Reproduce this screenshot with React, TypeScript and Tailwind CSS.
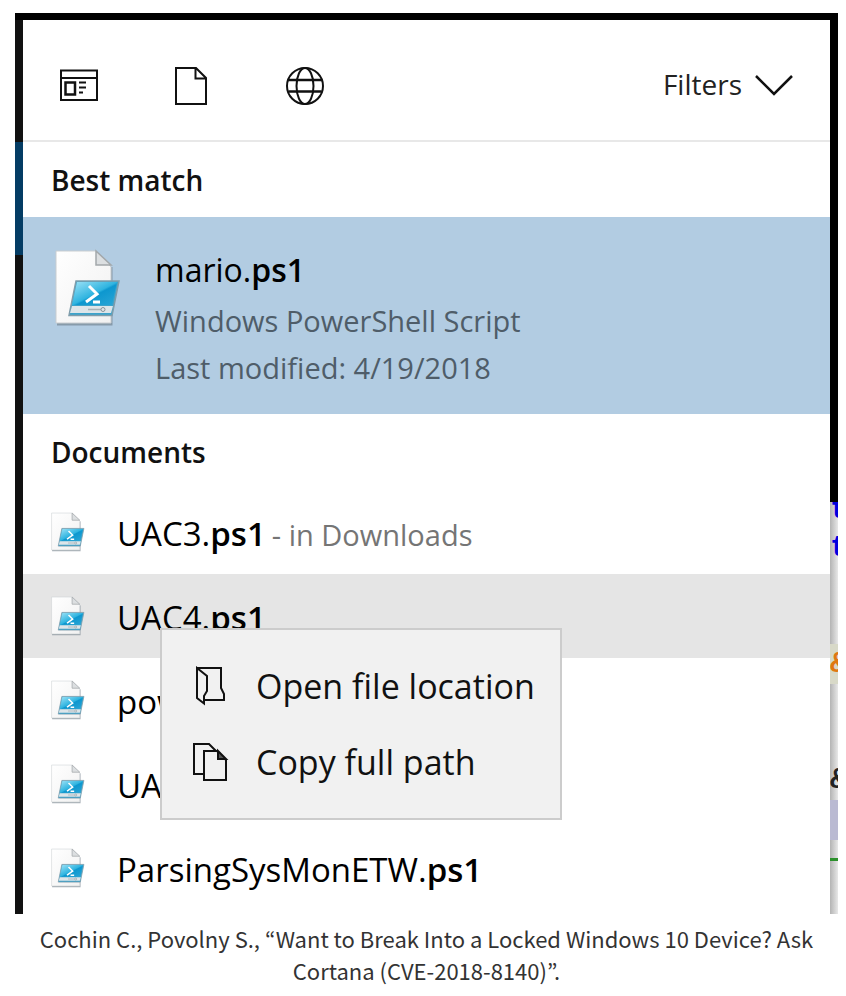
import React from "react";

function ScriptIcon({ className }: { className: string }) {
  return (
    <svg viewBox="0 0 66 78" className={className} aria-hidden="true">
      <defs>
        <linearGradient id="sheet" x1="0" y1="0" x2="1" y2="1">
          <stop offset="0" stopColor="#ffffff" />
          <stop offset="1" stopColor="#f1f1f1" />
        </linearGradient>
        <linearGradient id="glass" x1="0" y1="0" x2="1" y2="1">
          <stop offset="0" stopColor="#9fe3f7" />
          <stop offset="0.5" stopColor="#2fb4e0" />
          <stop offset="0.55" stopColor="#0d97cf" />
          <stop offset="1" stopColor="#2aa6d6" />
        </linearGradient>
      </defs>
      <path d="M2 75h54V18" fill="none" stroke="#6b7a86" strokeOpacity="0.6" strokeWidth="3" />
      <path d="M1 2h40l15 16v56H1z" fill="url(#sheet)" stroke="#c9cdd0" />
      <path d="M41 2v14h15z" fill="#dcdfe1" stroke="#a3a8ab" strokeWidth="1.5" />
      <path d="M21 32h43l-7 34.500H14z" fill="#3ba3cb" stroke="#7f9dab" strokeWidth="1.5" />
      <path d="M22 33h40l-5 23H17z" fill="url(#glass)" />
      <path d="M17 57h41l-2 7H15z" fill="#dde5e9" />
      <path d="M33 60.500h13" stroke="#a9b2b7" strokeWidth="1.500" />
      <circle cx="48" cy="60.500" r="2" fill="none" stroke="#8b9398" />
      <path d="M34 37l8 8-11 8M38 53h7" fill="none" stroke="#fff" strokeWidth="3" />
    </svg>
  );
}

function AppsIcon() {
  return (
    <svg viewBox="0 0 40 40" className="size-10" fill="none" stroke="#111" strokeWidth="2" aria-hidden="true">
      <path d="M2 4.500h36v29.500H2zM2 12h36" />
      <path d="M6.500 16.500h9.500v12H6.500z" strokeWidth="2.500" />
      <path d="M20 16.500h7M20 21.500h7M20 26.500h4" strokeWidth="2" />
    </svg>
  );
}

function PageIcon() {
  return (
    <svg viewBox="0 0 40 40" className="size-10" fill="none" stroke="#111" strokeWidth="2" aria-hidden="true">
      <path d="M4 2h20l10 10v26H4zM23.500 2v10.500H34" />
    </svg>
  );
}

function GlobeIcon() {
  return (
    <svg viewBox="0 0 40 40" className="size-10" fill="none" stroke="#111" strokeWidth="2" aria-hidden="true">
      <circle cx="20" cy="20" r="18" />
      <ellipse cx="20" cy="20" rx="8.500" ry="18" />
      <path d="M3.500 14h33M3.500 25.500h33" strokeWidth="2.500" />
    </svg>
  );
}

function FolderIcon() {
  return (
    <svg viewBox="0 0 40 40" className="size-10" fill="none" stroke="#111" strokeWidth="2" aria-hidden="true">
      <path d="M7 2h24v20l3 6v6H15" />
      <path d="M7 2v30l7 5.500V30l3-5V10z" />
    </svg>
  );
}

function CopyIcon() {
  return (
    <svg viewBox="0 0 40 40" className="size-10" fill="none" stroke="#111" strokeWidth="2" aria-hidden="true">
      <path d="M14 32H4V2h15l7 7" />
      <path d="M14 9h13l9 9v20H14z" />
      <path d="M28 9v8h8z" fill="#555" />
    </svg>
  );
}

function FileName({ stem }: { stem: string }) {
  return (
    <span>
      {stem}.<b className="font-semibold">ps1</b>
    </span>
  );
}

const documents = [
  { stem: "UAC3", folder: "in Downloads" },
  { stem: "UAC4", selected: true },
  { stem: "powerup" },
  { stem: "UAC" },
  { stem: "ParsingSysMonETW" },
];

function ContextMenu() {
  return (
    <div role="menu" className="absolute left-[137px] top-[54px] z-10 w-[402px] border-2 border-[#cccccc] bg-[#f1f1f1] py-[18px]">
      <button role="menuitem" className="flex h-[76px] w-full items-center gap-[26px] pl-7 text-[34px] leading-10">
        <FolderIcon />
        Open file location
      </button>
      <button role="menuitem" className="flex h-[76px] w-full items-center gap-[26px] pl-7 text-[34px] leading-10">
        <CopyIcon />
        Copy full path
      </button>
    </div>
  );
}

function SearchPanel() {
  return (
    <main className="min-w-0 flex-1 bg-white">
      <header className="flex h-[122px] items-center justify-between border-b-2 border-[#e8e8e8] px-9 pt-3">
        <nav className="flex gap-[73px]">
          <button aria-label="Apps"><AppsIcon /></button>
          <button aria-label="Documents"><PageIcon /></button>
          <button aria-label="Web"><GlobeIcon /></button>
        </nav>
        <button aria-haspopup="true" className="flex items-center gap-3 pb-1 text-[28px] leading-10 text-[#222]">
          Filters
          <svg viewBox="0 0 40 24" className="h-6 w-10" fill="none" stroke="#111" strokeWidth="2.500" aria-hidden="true">
            <path d="M2 4l18 18L38 4" />
          </svg>
        </button>
      </header>

      <h2 className="flex h-[75px] items-center pl-7 text-[28px] font-semibold leading-10">Best match</h2>
      <button className="flex h-[197px] w-full items-start gap-[34px] bg-[#b2cce2] pl-8 pt-8 text-left">
        <ScriptIcon className="h-[78px] w-[66px]" />
        <span className="flex flex-col text-[29px] leading-[47px] text-[#4f5d69]">
          <span className="text-[32px] leading-[42px] text-black"><FileName stem="mario" /></span>
          <span className="pt-[6px]">Windows PowerShell Script</span>
          <span>Last modified: 4/19/2018</span>
        </span>
      </button>

      <h2 className="flex h-[76px] items-center pl-7 text-[28px] font-semibold leading-10">Documents</h2>
      <ul>
        {documents.map((doc) => (
          <li key={doc.stem} className="relative last:pb-1">
            <button className={doc.selected ? "flex h-[84px] w-full items-center bg-[#e5e5e5] pl-7 text-left" : "flex h-[84px] w-full items-center pl-7 text-left"}>
              <ScriptIcon className="mr-8 h-10 w-[34px]" />
              <span className="flex items-baseline gap-[6px] pt-1 text-[33px] leading-[46px] text-black">
                <FileName stem={doc.stem} />
                {doc.folder && <span className="text-[29px] text-[#757575]">- {doc.folder}</span>}
              </span>
            </button>
            {doc.selected && <ContextMenu />}
          </li>
        ))}
      </ul>
    </main>
  );
}

function EditorEdge() {
  return (
    <div aria-hidden="true" className="flex w-2 shrink-0 flex-col overflow-hidden bg-gradient-to-r from-[#b4b4b4] to-[#e8e8e8] font-['Liberation_Mono',monospace] text-[30px] font-bold leading-8">
      <div className="h-[482px] bg-black" />
      <div className="flex h-6 items-end overflow-hidden text-[#0000dd]">t</div>
      <div className="mt-[6px] h-8 text-[#0000dd]">t</div>
      <div className="mt-20 h-10 bg-[#d8d9c8] leading-10 text-[#e07810]">&amp;</div>
      <div className="mt-[76px] h-10 leading-10 text-[#222]">&amp;</div>
      <div className="h-10 bg-[#babad2]" />
      <div className="mt-[18px] h-[3px] bg-[#2c902c]" />
    </div>
  );
}

export default function App() {
  return (
    <figure className="bg-white pb-2 pl-[15px] pr-2 pt-[13px] font-['Open_Sans',sans-serif] text-[#111]">
      <div className="border-t-[7px] border-black">
        <div className="flex">
          <div className="flex w-2 shrink-0 flex-col bg-[#111]">
            <div className="mt-[122px] h-[113px] bg-[#043c64]" />
          </div>
          <SearchPanel />
          <EditorEdge />
        </div>
      </div>
      <figcaption lang="en" className="px-3 pt-2 text-center font-['Noto_Sans_CJK_KR',sans-serif] text-[22px] leading-8 text-[#333]">
        Cochin C., Povolny S., “Want to Break Into a Locked Windows 10 Device? Ask Cortana (CVE-2018-8140)”.
      </figcaption>
    </figure>
  );
}
